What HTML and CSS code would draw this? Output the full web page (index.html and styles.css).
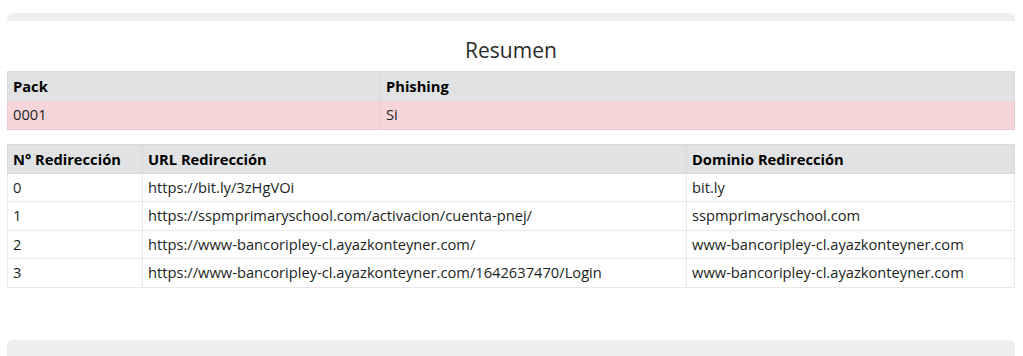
FILE: index.html
```html
<!DOCTYPE html>
<html lang="es">
<head>
<meta charset="utf-8">
<title>Resumen</title>
<link rel="stylesheet" href="styles.css">
</head>
<body>
<div class="page">
  <div class="bar"></div>
  <h4 class="title">Resumen</h4>
  <table class="tbl tbl-pack">
    <colgroup><col class="c-pack"><col></colgroup>
    <thead><tr><th>Pack</th><th>Phishing</th></tr></thead>
    <tbody><tr class="danger"><td>0001</td><td>Si</td></tr></tbody>
  </table>
  <table class="tbl tbl-redir">
    <colgroup><col class="c-num"><col class="c-url"><col></colgroup>
    <thead><tr><th>N° Redirección</th><th>URL Redirección</th><th>Dominio Redirección</th></tr></thead>
    <tbody>
      <tr><td>0</td><td>https://bit.ly/3zHgVOi</td><td>bit.ly</td></tr>
      <tr><td>1</td><td>https://sspmprimaryschool.com/activacion/cuenta-pnej/</td><td>sspmprimaryschool.com</td></tr>
      <tr><td>2</td><td>https://www-bancoripley-cl.ayazkonteyner.com/</td><td>www-bancoripley-cl.ayazkonteyner.com</td></tr>
      <tr><td>3</td><td>https://www-bancoripley-cl.ayazkonteyner.com/1642637470/Login</td><td>www-bancoripley-cl.ayazkonteyner.com</td></tr>
    </tbody>
  </table>
  <div class="bar bar-bottom"></div>
</div>
</body>
</html>
```
FILE: styles.css
```css
html, body {
  margin: 0;
  padding: 0;
  background: #fff;
}
body {
  font-family: "Open Sans", "Noto Sans", sans-serif;
  color: #1c1f22;
  font-size: 14.7px;
}
.page {
  padding: 13px 8px 0 7px;
}
.bar {
  height: 8px;
  background: #efefef;
  border-radius: 6px 6px 0 0;
}
.bar-bottom {
  margin-top: 52px;
  height: 16px;
}
.title {
  margin: 16px 0 8px;
  text-align: center;
  font-weight: 400;
  font-size: 21px;
  line-height: 26px;
  color: #2b2b2b;
}
.tbl {
  width: 100%;
  border-collapse: collapse;
  table-layout: fixed;
}
.tbl-redir {
  margin-top: 14px;
}
.c-pack { width: 373px; }
.c-num { width: 135px; }
.c-url { width: 544px; }
.tbl th, .tbl td {
  text-align: left;
  padding: 4px 5px;
  border: 1px solid #e8e8e8;
  white-space: nowrap;
}
.tbl th {
  background: #e1e2e4;
  font-weight: 700;
  color: #000;
  line-height: 20px;
  border-color: #d9dadc;
}
.tbl td {
  line-height: 19.5px;
}
.tbl tr.danger td {
  background: #f7d6d9;
  border-color: #ecc9cc;
}
```
